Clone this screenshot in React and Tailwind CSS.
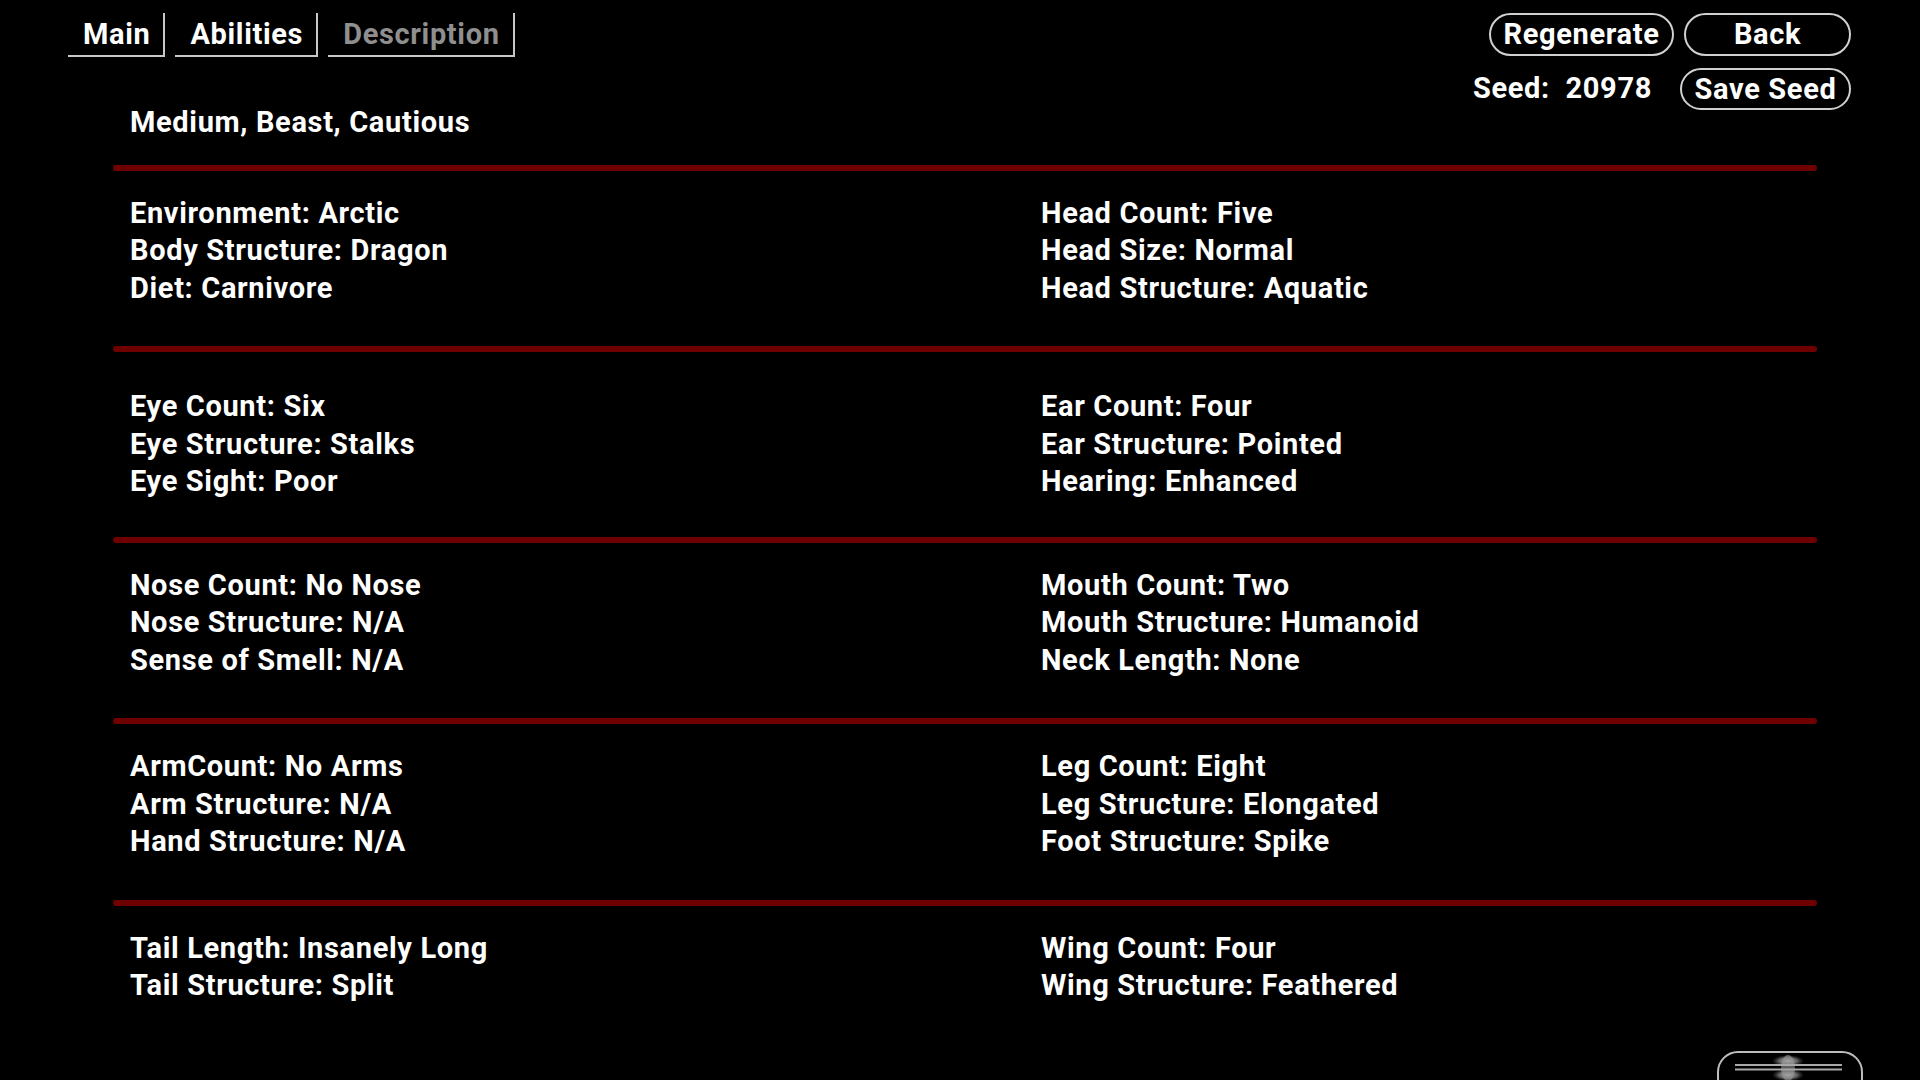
import React from 'react';

const sections = [
  {
    pad: 'pt-[24px] pb-[39px]',
    left: ['Environment: Arctic', 'Body Structure: Dragon', 'Diet: Carnivore'],
    right: ['Head Count: Five', 'Head Size: Normal', 'Head Structure: Aquatic'],
  },
  {
    pad: 'pt-[36px] pb-[36px]',
    left: ['Eye Count: Six', 'Eye Structure: Stalks', 'Eye Sight: Poor'],
    right: ['Ear Count: Four', 'Ear Structure: Pointed', 'Hearing: Enhanced'],
  },
  {
    pad: 'pt-[24px] pb-[39px]',
    left: ['Nose Count: No Nose', 'Nose Structure: N/A', 'Sense of Smell: N/A'],
    right: ['Mouth Count: Two', 'Mouth Structure: Humanoid', 'Neck Length: None'],
  },
  {
    pad: 'pt-[24px] pb-[39px]',
    left: ['ArmCount: No Arms', 'Arm Structure: N/A', 'Hand Structure: N/A'],
    right: ['Leg Count: Eight', 'Leg Structure: Elongated', 'Foot Structure: Spike'],
  },
  {
    pad: 'pt-[24px] pb-[20px]',
    left: ['Tail Length: Insanely Long', 'Tail Structure: Split'],
    right: ['Wing Count: Four', 'Wing Structure: Feathered'],
  },
];

function Tab({ label, active }) {
  return (
    <div className={`h-[44px] pl-[15px] pr-[13px] border-b-2 border-r-2 border-[#c8c8c8] leading-[42px] ${active ? 'text-white' : 'text-[#8f8f8f]'}`}>
      {label}
    </div>
  );
}

function PillButton({ label, className }) {
  return (
    <button className={`rounded-full border-2 border-[#d0d0d0] text-white text-[29px] tracking-[0.65px] leading-none flex items-center justify-center ${className}`}>
      {label}
    </button>
  );
}

function Divider() {
  return <div className="h-[6px] w-[1704px] bg-[#6e0000] rounded-full" />;
}

function ScrollHandle() {
  return (
    <svg className="absolute left-[1716px] top-[1050px]" width="150" height="40" viewBox="0 0 150 40">
      <defs>
        <radialGradient id="blob" cx="50%" cy="50%" r="50%">
          <stop offset="0%" stopColor="#b0b0b0" />
          <stop offset="55%" stopColor="#8a8a8a" stopOpacity="0.75" />
          <stop offset="100%" stopColor="#555" stopOpacity="0" />
        </radialGradient>
      </defs>
      <rect x="2" y="2" width="144" height="46" rx="20" fill="none" stroke="#bdbdbd" strokeWidth="2" />
      <ellipse cx="72" cy="11" rx="16" ry="6" fill="url(#blob)" />
      <ellipse cx="72" cy="25" rx="16" ry="6" fill="url(#blob)" />
      <ellipse cx="72" cy="18" rx="7" ry="13" fill="#9a9a9a" opacity="0.6" />
      <line x1="19" y1="15" x2="126" y2="15" stroke="#a8a8a8" strokeWidth="2" />
      <line x1="19" y1="19.5" x2="126" y2="19.5" stroke="#a8a8a8" strokeWidth="2" />
    </svg>
  );
}

export default function App() {
  return (
    <div className="relative w-full h-[1080px] overflow-hidden bg-black text-white text-[29px] font-bold tracking-[0.65px]" style={{ fontFamily: 'Roboto, "Noto Sans", sans-serif' }}>
      <div className="flex justify-between">
        <div className="flex gap-[10px] pl-[68px] pt-[13px] items-start">
          <Tab label="Main" active />
          <Tab label="Abilities" active />
          <Tab label="Description" />
        </div>
        <div className="flex flex-col items-end pr-[69px] pt-[13px]">
          <div className="flex gap-[10px]">
            <PillButton label="Regenerate" className="w-[185px] h-[43px]" />
            <PillButton label="Back" className="w-[167px] h-[43px]" />
          </div>
          <div className="flex items-center gap-[28px] mt-[12px]">
            <span className="whitespace-pre leading-[37.5px]">Seed:  20978</span>
            <PillButton label="Save Seed" className="w-[171px] h-[42px]" />
          </div>
        </div>
      </div>

      <div className="ml-[113px] w-[1704px] -mt-[6px]">
        <div className="pl-[17px] leading-[37.5px]">Medium, Beast, Cautious</div>
        <div className="h-[23px]" />
        {sections.map((s, i) => (
          <div key={i}>
            <Divider />
            <div className={`grid grid-cols-[911px_1fr] pl-[17px] leading-[37.5px] ${s.pad}`}>
              <div>
                {s.left.map((t) => (
                  <div key={t} className="whitespace-pre">{t}</div>
                ))}
              </div>
              <div>
                {s.right.map((t) => (
                  <div key={t} className="whitespace-pre">{t}</div>
                ))}
              </div>
            </div>
          </div>
        ))}
      </div>

      <ScrollHandle />
    </div>
  );
}
